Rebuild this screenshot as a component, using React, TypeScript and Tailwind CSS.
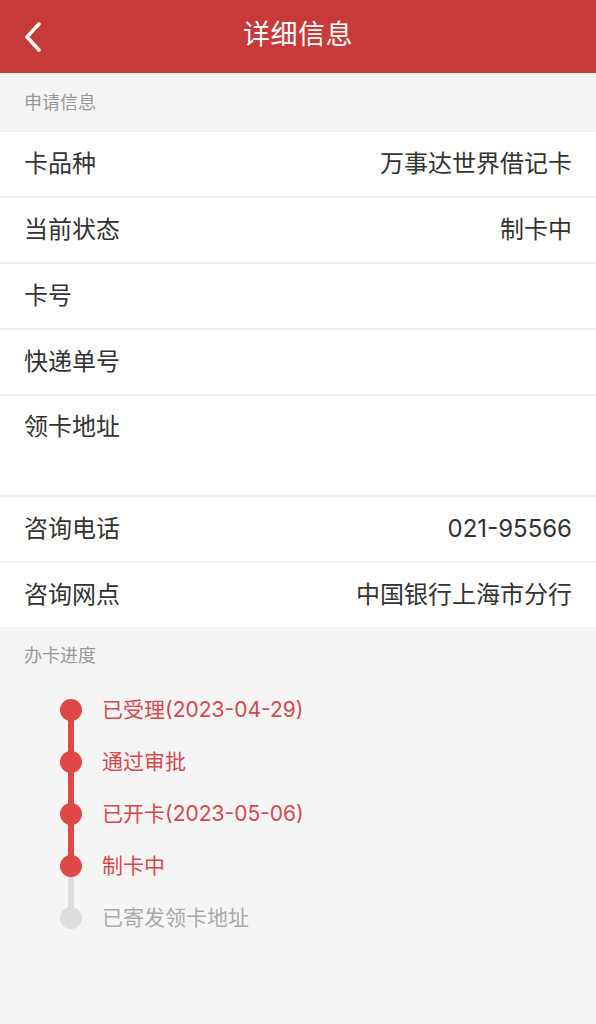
import React from "react";

const font = { fontFamily: 'Inter, "Noto Sans CJK SC", "Noto Sans", sans-serif' };

function Row({ label, value, tall }: { label: string; value?: string; tall?: boolean }) {
  return (
    <div className={`flex justify-between bg-white px-6 ${tall ? "h-[99px] items-start pt-[15px]" : "h-[64px] items-center"}`}>
      <span className="text-[24px] leading-[32px] text-[#333333]">{label}</span>
      {value && <span className="text-[24px] leading-[32px] text-[#333333]">{value}</span>}
    </div>
  );
}

const steps = [
  { t: "已受理(2023-04-29)", done: true },
  { t: "通过审批", done: true },
  { t: "已开卡(2023-05-06)", done: true },
  { t: "制卡中", done: true },
  { t: "已寄发领卡地址", done: false },
];

export default function App() {
  return (
    <div style={font} className="w-[596px] min-h-[1024px] bg-[#f5f5f5]">
      <div className="relative flex h-[73px] items-center justify-center bg-[#c8393a]">
        <svg className="absolute left-[22px] top-[21px]" width="22" height="32" viewBox="0 0 22 32">
          <path d="M17 3 L5 16 L17 29" fill="none" stroke="white" strokeWidth="3.6" strokeLinecap="round" strokeLinejoin="round" />
        </svg>
        <span className="-mt-[2px] text-[27px] text-white tracking-[0.5px]">详细信息</span>
      </div>
      <div className="flex h-[58px] items-center px-6 text-[18px] text-[#999999]">申请信息</div>
      <div className="flex flex-col gap-[2px] bg-[#f0f0f0] pt-[1px]">
        <Row label="卡品种" value="万事达世界借记卡" />
        <Row label="当前状态" value="制卡中" />
        <Row label="卡号" />
        <Row label="快递单号" />
        <Row label="领卡地址" tall />
        <Row label="咨询电话" value="021-95566" />
        <Row label="咨询网点" value="中国银行上海市分行" />
      </div>
      <div className="flex h-[57px] items-center px-6 text-[18px] text-[#999999]">办卡进度</div>
      <div className="flex flex-col pl-[60px] pt-[15px]">
        {steps.map((s, i) => {
          const next = steps[i + 1];
          return (
            <div key={i} className="relative flex h-[52px] items-start">
              {next && (
                <div
                  className={`absolute left-[8px] top-[11px] h-[52px] w-[6px] ${next.done ? "bg-[#e04848]" : "bg-[#dddddd]"}`}
                />
              )}
              <div className={`relative z-10 h-[22px] w-[22px] rounded-full ${s.done ? "bg-[#e04848]" : "bg-[#dddddd]"}`} />
              <span
                className={`ml-[20px] -mt-[3px] text-[21px] leading-[28px] ${s.done ? "text-[#d9474a]" : "text-[#aaaaaa]"}`}
              >
                {s.t}
              </span>
            </div>
          );
        })}
      </div>
    </div>
  );
}
